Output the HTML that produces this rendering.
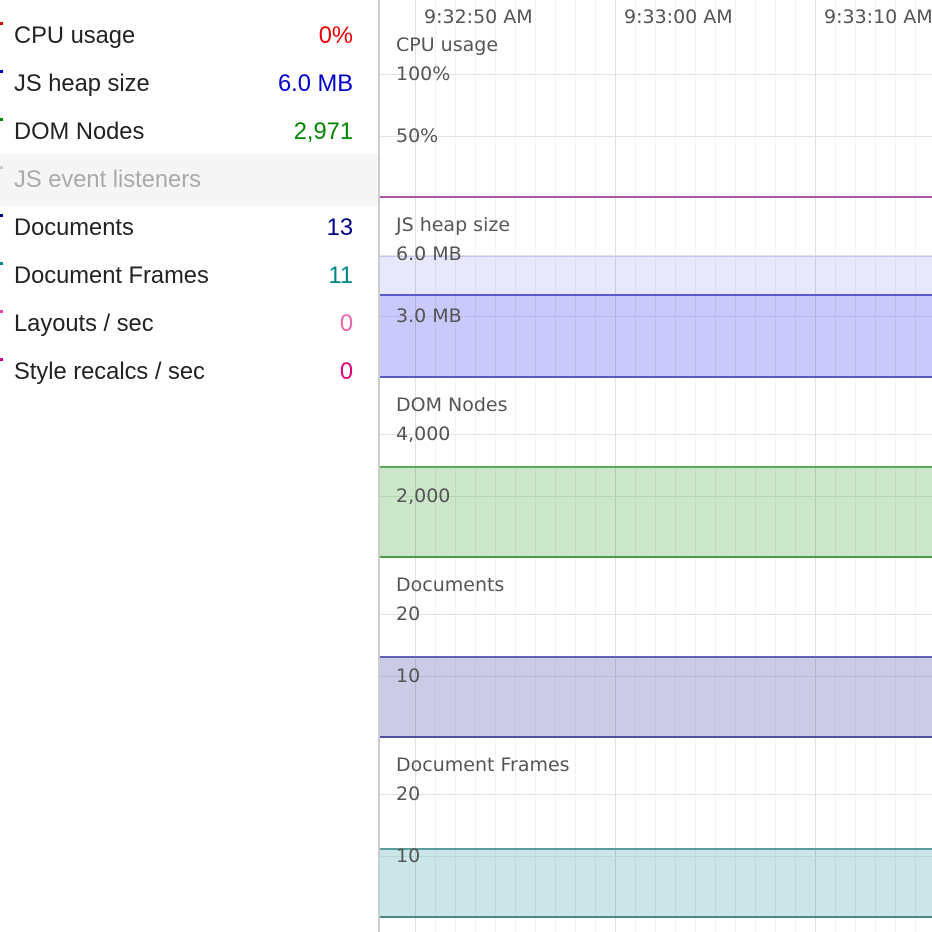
<!DOCTYPE html>
<html><head><style>
*{margin:0;padding:0;box-sizing:border-box}
body{width:932px;height:932px;overflow:hidden;background:#fff;position:relative;font-family:"Liberation Sans",sans-serif}
.row{position:absolute;left:0;width:378px;height:48px;font-size:23.7px;color:#222;line-height:48px}
.row .n{position:absolute;left:14px}
.row .v{position:absolute;right:25px}
.row .t{position:absolute;left:0;top:10px;width:3px;height:3px}
.a{position:absolute}
.lab{position:absolute;left:396px;font-family:"DejaVu Sans","Liberation Sans",sans-serif;font-size:19px;color:#555;line-height:20px;white-space:nowrap}
.g{position:absolute;left:380px;width:552px;height:1px;background:#e2e2e2}
</style></head><body>
<div class="a" style="left:0;top:154px;width:378px;height:52px;background:#f5f5f5"></div>
<div class="row" style="top:12px"><span class="t" style="background:#d00"></span><span class="n">CPU usage</span><span class="v" style="color:#e00">0%</span></div>
<div class="row" style="top:60px"><span class="t" style="background:#00c"></span><span class="n">JS heap size</span><span class="v" style="color:#00c">6.0 MB</span></div>
<div class="row" style="top:108px"><span class="t" style="background:#080"></span><span class="n">DOM Nodes</span><span class="v" style="color:#080">2,971</span></div>
<div class="row" style="top:156px"><span class="t" style="background:#ccc"></span><span class="n" style="color:#aaa">JS event listeners</span></div>
<div class="row" style="top:204px"><span class="t" style="background:#008"></span><span class="n">Documents</span><span class="v" style="color:#008">13</span></div>
<div class="row" style="top:252px"><span class="t" style="background:#088"></span><span class="n">Document Frames</span><span class="v" style="color:#088">11</span></div>
<div class="row" style="top:300px"><span class="t" style="background:#e4a"></span><span class="n">Layouts / sec</span><span class="v" style="color:#e6a">0</span></div>
<div class="row" style="top:348px"><span class="t" style="background:#c08"></span><span class="n">Style recalcs / sec</span><span class="v" style="color:#d07">0</span></div>

<div class="a" style="left:380px;top:257px;width:552px;height:38px;background:#e8e8fd"></div>
<div class="a" style="left:380px;top:295px;width:552px;height:82px;background:#c9c9fb"></div>
<div class="a" style="left:380px;top:467px;width:552px;height:90px;background:#cce6ca"></div>
<div class="a" style="left:380px;top:657px;width:552px;height:80px;background:#cbcbe6"></div>
<div class="a" style="left:380px;top:849px;width:552px;height:68px;background:#cbe6e8"></div>

<svg class="a" style="left:380px;top:0" width="552" height="932">
<g stroke="#000" stroke-opacity="0.05">
<line x1="55.5" y1="0" x2="55.5" y2="932"/><line x1="75.5" y1="0" x2="75.5" y2="932"/><line x1="95.5" y1="0" x2="95.5" y2="932"/><line x1="115.5" y1="0" x2="115.5" y2="932"/><line x1="135.5" y1="0" x2="135.5" y2="932"/><line x1="155.5" y1="0" x2="155.5" y2="932"/><line x1="175.5" y1="0" x2="175.5" y2="932"/><line x1="195.5" y1="0" x2="195.5" y2="932"/><line x1="215.5" y1="0" x2="215.5" y2="932"/>
<line x1="255.5" y1="0" x2="255.5" y2="932"/><line x1="275.5" y1="0" x2="275.5" y2="932"/><line x1="295.5" y1="0" x2="295.5" y2="932"/><line x1="315.5" y1="0" x2="315.5" y2="932"/><line x1="335.5" y1="0" x2="335.5" y2="932"/><line x1="355.5" y1="0" x2="355.5" y2="932"/><line x1="375.5" y1="0" x2="375.5" y2="932"/><line x1="395.5" y1="0" x2="395.5" y2="932"/><line x1="415.5" y1="0" x2="415.5" y2="932"/>
<line x1="455.5" y1="0" x2="455.5" y2="932"/><line x1="475.5" y1="0" x2="475.5" y2="932"/><line x1="495.5" y1="0" x2="495.5" y2="932"/><line x1="515.5" y1="0" x2="515.5" y2="932"/><line x1="535.5" y1="0" x2="535.5" y2="932"/>
</g>
<g stroke="#000" stroke-opacity="0.12"><line x1="35.5" y1="0" x2="35.5" y2="932"/><line x1="235.5" y1="0" x2="235.5" y2="932"/><line x1="435.5" y1="0" x2="435.5" y2="932"/></g>
</svg>

<div class="g" style="top:74px"></div><div class="g" style="top:136px"></div>
<div class="g" style="top:255px"></div><div class="g" style="top:316px;background:#b8b8ee"></div>
<div class="g" style="top:434px"></div><div class="g" style="top:496px;background:#b5d8b3"></div>
<div class="g" style="top:614px"></div><div class="g" style="top:676px;background:#b8b8d8"></div>
<div class="g" style="top:794px"></div><div class="g" style="top:856px;background:#b5d8d8"></div>

<div class="g" style="top:196px;height:2px;background:#a855b0"></div>
<div class="g" style="top:256px;background:#c6c6ee"></div>
<div class="g" style="top:294px;height:2px;background:#5a5ac8"></div>
<div class="g" style="top:376px;height:2px;background:#5a5ac0"></div>
<div class="g" style="top:466px;height:2px;background:#5aaa5a"></div>
<div class="g" style="top:556px;height:2px;background:#4a9a4a"></div>
<div class="g" style="top:656px;height:2px;background:#6262b0"></div>
<div class="g" style="top:736px;height:2px;background:#5050a0"></div>
<div class="g" style="top:848px;height:2px;background:#5a9c9c"></div>
<div class="g" style="top:916px;height:2px;background:#4a8888"></div>

<div class="a" style="left:378px;top:0;width:2px;height:932px;background:#ccc"></div>

<div class="lab" style="left:424px;top:7px">9:32:50 AM</div>
<div class="lab" style="left:624px;top:7px">9:33:00 AM</div>
<div class="lab" style="left:824px;top:7px">9:33:10 AM</div>

<div class="lab" style="top:35px">CPU usage</div>
<div class="lab" style="top:64px">100%</div>
<div class="lab" style="top:126px">50%</div>
<div class="lab" style="top:215px">JS heap size</div>
<div class="lab" style="top:244px">6.0 MB</div>
<div class="lab" style="top:306px">3.0 MB</div>
<div class="lab" style="top:395px">DOM Nodes</div>
<div class="lab" style="top:424px">4,000</div>
<div class="lab" style="top:486px">2,000</div>
<div class="lab" style="top:575px">Documents</div>
<div class="lab" style="top:604px">20</div>
<div class="lab" style="top:666px">10</div>
<div class="lab" style="top:755px">Document Frames</div>
<div class="lab" style="top:784px">20</div>
<div class="lab" style="top:846px">10</div>
</body></html>
